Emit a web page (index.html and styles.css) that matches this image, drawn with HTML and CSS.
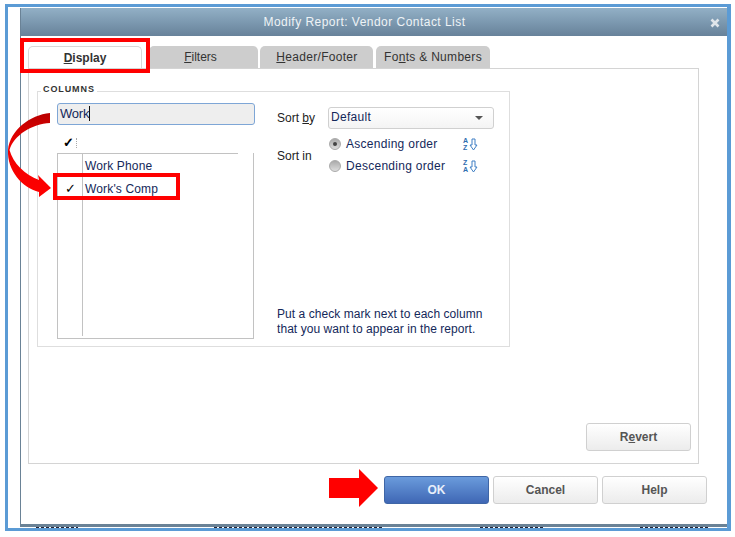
FILE: index.html
```html
<!DOCTYPE html>
<html lang="en">
<head>
<meta charset="utf-8">
<title>Modify Report: Vendor Contact List</title>
<link rel="stylesheet" href="styles.css">
</head>
<body>
<div class="frame">
  <div class="window">
    <div class="titlebar">
      <span class="title">Modify Report: Vendor Contact List</span>
      <svg class="close" width="10" height="10" viewBox="0 0 10 10"><path d="M1.500 1.500l7 7M8.500 1.500l-7 7" stroke="#dfe5ea" stroke-width="2.600" fill="none"/></svg>
    </div>
    <div class="body">
      <div class="tabs">
        <div class="tab tab-active"><span><u>D</u>isplay</span></div>
        <div class="tab tab-filters"><span><u>F</u>ilters</span></div>
        <div class="tab tab-header"><span><u>H</u>eader/Footer</span></div>
        <div class="tab tab-fonts"><span>Fo<u>n</u>ts &amp; Numbers</span></div>
      </div>
      <div class="pane">
        <div class="group">
          <div class="legend">COLUMNS</div>
          <div class="left">
            <div class="search">Work<i class="caret"></i></div>
            <div class="listhead"><span class="check-head">✓</span><span class="dots"></span></div>
            <div class="list">
              <div class="row"><span class="cell-check"></span><span class="cell-name">Work Phone</span></div>
              <div class="row"><span class="cell-check">✓</span><span class="cell-name">Work's Comp</span></div>
              <div class="row row-fill"><span class="cell-check"></span><span class="cell-name"></span></div>
            </div>
          </div>
          <div class="right">
            <div class="sortby">
              <span class="lbl">Sort <u>b</u>y</span>
              <div class="select"><span>Default</span><i class="arrow"></i></div>
            </div>
            <div class="sortin">
              <span class="lbl lbl-in">Sort in</span>
              <div class="radios">
                <div class="radio-row"><i class="radio radio-on"></i><span class="radio-text">Ascending order</span><span class="sorticon"><small>A<br>Z</small><svg width="9" height="13" viewBox="0 0 9 13"><path d="M3 1h3v6h2l-3.500 5L1 7h2z" fill="none" stroke="#3f7fc4" stroke-width="1"/></svg></span></div>
                <div class="radio-row"><i class="radio"></i><span class="radio-text">Descending order</span><span class="sorticon"><small>Z<br>A</small><svg width="9" height="13" viewBox="0 0 9 13"><path d="M3 1h3v6h2l-3.500 5L1 7h2z" fill="none" stroke="#3f7fc4" stroke-width="1"/></svg></span></div>
              </div>
            </div>
            <p class="hint">Put a check mark next to each column<br>that you want to appear in the report.</p>
          </div>
        </div>
        <div class="revert-row"><button class="btn">R<u>e</u>vert</button></div>
      </div>
      <div class="actions">
        <button class="btn btn-ok">OK</button>
        <button class="btn">Cancel</button>
        <button class="btn">Help</button>
      </div>
    </div>
  </div>
  <div class="remnant"><i class="rem rem-a"></i><i class="rem rem-b"></i><i class="rem rem-c"></i><i class="rem rem-d"></i></div>
</div>

<div class="mark mark-tab"></div>
<div class="mark mark-row"></div>
<svg class="anno anno-curve" width="46" height="86" viewBox="6 112 46 86">
  <defs><linearGradient id="cg" x1="0" y1="0" x2="0" y2="1"><stop offset="0" stop-color="#b80000"/><stop offset="0.4" stop-color="#f00000"/><stop offset="1" stop-color="#ff0000"/></linearGradient></defs>
  <path d="M50 113 C30 115 10 130 8 150 C7 170 22 188 39 192 L39 197 L51 188 L38 175 L39 180 C25 175 13 163 9.500 150 C14 135 32 124 50 123 Z" fill="url(#cg)"/>
</svg>
<svg class="anno anno-ok" width="49" height="38" viewBox="0 0 49 38"><path d="M0 9h30V0l19 19-19 19V29H0z" fill="#ff0000"/></svg>
</body>
</html>
```
FILE: styles.css
```css
* { box-sizing: border-box; }
html, body { margin: 0; padding: 0; background: #fff; }
body { width: 735px; height: 537px; overflow: hidden; position: relative; padding: 4px 4px 0 5px; font-family: "Liberation Sans", Arial, sans-serif; font-size: 12px; color: #1a1a1a; }
.frame { width: 726px; height: 527px; border: 3px solid #5b9bd5; border-right-width: 4px; padding: 1px 0 0 12px; background: #fff; }
.window { height: 519px; display: flex; flex-direction: column; border-left: 1px solid #6a8296; border-bottom: 3px solid #6a8296; }
.remnant { height: 1px; display: flex; margin-left: 16px; }
.rem { display: block; height: 1px; background: repeating-linear-gradient(90deg, #223 0 3px, #fff 3px 5px); }
.rem-a { width: 42px; margin-right: 136px; }
.rem-b { width: 170px; margin-right: 96px; }
.rem-c { width: 65px; margin-right: 95px; }
.rem-d { width: 70px; }
.titlebar { height: 28px; flex: none; background: linear-gradient(#92b0c6, #67829a); display: flex; align-items: center; justify-content: center; position: relative; }
.title { color: #eef3f6; font-size: 12px; letter-spacing: 0.47px; margin-left: -19px; }
.close { position: absolute; right: 7px; top: 10px; }
.body { flex: 1; display: flex; flex-direction: column; padding: 10px 20px 0 7px; }
.tabs { display: flex; height: 22px; flex: none; align-items: stretch; }
.tab { background: #cdcdcd; border-radius: 5px 5px 0 0; display: flex; align-items: center; justify-content: center; letter-spacing: 0.3px; color: #333; }
.tab-active { width: 114px; background: #fff; border: 1px solid #d8d8d8; border-bottom: 0; font-weight: bold; letter-spacing: 0; margin-right: 7px; }
.tab-filters { width: 109px; margin-right: 2px; letter-spacing: 0; padding-right: 6px; }
.tab-header { width: 113px; margin-right: 3px; padding-left: 1px; }
.tab-fonts { width: 114px; }
.pane { width: 671px; height: 396px; flex: none; border: 1px solid #d4d4d4; display: flex; flex-direction: column; padding: 0 7px 0 8px; }
.group { position: relative; margin-top: 22px; padding-left: 19px; width: 473px; height: 256px; border: 1px solid #dedede; display: flex; gap: 22px; }
.legend { position: absolute; left: 3px; top: -8px; background: #fff; font-size: 9px; font-weight: bold; letter-spacing: 0.9px; color: #333; padding: 0 2px; line-height: 10px; }
.left { width: 198px; flex: none; margin-top: 11px; display: flex; flex-direction: column; }
.search { height: 22px; width: 198px; border: 1px solid #7ea6d6; border-radius: 3px; background: #eeeeee; padding: 2px; font-size: 13px; letter-spacing: -0.2px; line-height: 15px; color: #14285a; display: flex; }
.caret { width: 1px; height: 15px; background: #111; display: block; }
.listhead { height: 28px; display: flex; align-items: center; padding: 7px 0 0 6px; }
.check-head { font-size: 13px; font-weight: bold; color: #000; width: 12px; }
.dots { width: 0; height: 10px; border-left: 1px dotted #aaa; margin-left: 1px; }
.list { width: 197px; height: 186px; border: 1px solid #c2c2c2; border-top: 0; display: flex; flex-direction: column; position: relative; }
.list::before { content: ""; position: absolute; left: -1px; top: 0; width: 181px; height: 1px; background: #c2c2c2; }
.row { height: 23px; flex: none; display: flex; }
.row-fill { flex: 1; padding-bottom: 2px; }
.cell-check { width: 25px; flex: none; border-right: 1px solid #c2c2c2; text-align: center; font-size: 13px; line-height: 25px; padding-left: 1px; color: #000; }
.cell-name { padding-left: 2px; line-height: 26px; letter-spacing: 0.15px; color: #14285a; }
.right { width: 218px; flex: none; margin-top: 15px; display: flex; flex-direction: column; }
.lbl { width: 51px; flex: none; color: #222; }
.lbl-in { padding-top: 1px; }
.sortby { display: flex; align-items: center; height: 22px; }
.select { width: 166px; height: 22px; border: 1px solid #d0d0d0; border-radius: 3px; background: linear-gradient(#fff, #f4f4f4); display: flex; justify-content: space-between; align-items: center; padding: 0 10px 2px 2px; letter-spacing: 0.3px; color: #14285a; }
.arrow { border: 4px solid transparent; border-top: 4px solid #555; border-bottom: 0; margin-top: 2px; }
.sortin { display: flex; align-items: center; margin-top: 9px; }
.radios { display: flex; flex-direction: column; gap: 10px; }
.radio-row { display: flex; align-items: center; height: 12px; }
.radio { width: 12px; height: 12px; border-radius: 50%; background: linear-gradient(#aaa, #ddd); border: 1px solid #aaa; display: flex; align-items: center; justify-content: center; flex: none; margin-left: 1px; }
.radio-on::after { content: ""; width: 4px; height: 4px; border-radius: 50%; background: #444; }
.radio-text { margin-left: 5px; width: 117px; letter-spacing: 0.28px; color: #14285a; white-space: nowrap; }
.sorticon { display: flex; align-items: center; }
.sorticon small { font-size: 7px; line-height: 7px; color: #2f6db0; font-weight: bold; width: 6px; display: block; }
.hint { margin: auto 0 9px; line-height: 15px; letter-spacing: 0.06px; color: #14285a; }
.revert-row { display: flex; justify-content: flex-end; margin-top: auto; padding-bottom: 12px; }
.btn { width: 105px; height: 28px; border: 1px solid #d0d0d0; border-radius: 3px; background: linear-gradient(#fff, #ececec); font-family: inherit; font-size: 12px; font-weight: bold; color: #555; padding: 0; }
.actions { display: flex; justify-content: flex-end; gap: 4px; padding-top: 12px; }
.btn-ok { background: linear-gradient(#6a9bdc, #3f67b5); border-color: #3f66a6; color: #e8effa; }
.mark { position: absolute; border: 4px solid #ff0000; }
.mark-tab { left: 20px; top: 38px; width: 130px; height: 35px; }
.mark-row { left: 53px; top: 173px; width: 127px; height: 27px; }
.anno { position: absolute; }
.anno-curve { left: 6px; top: 112px; }
.anno-ok { left: 329px; top: 469px; }
```
